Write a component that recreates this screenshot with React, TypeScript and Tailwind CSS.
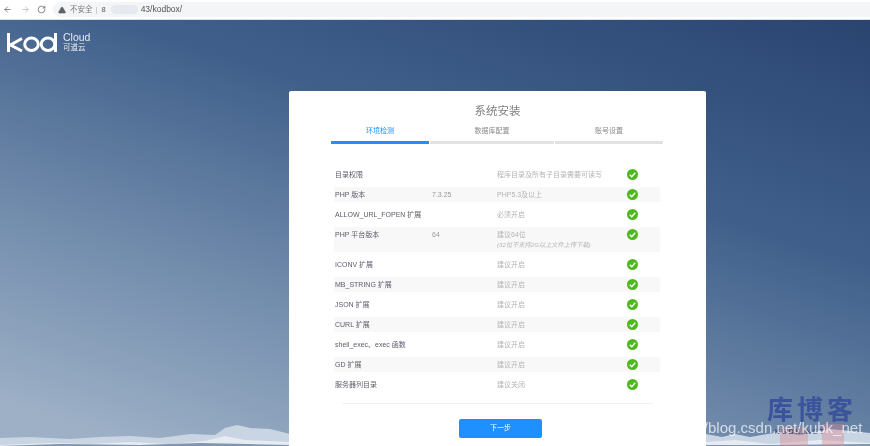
import React from 'react';
import { ArrowLeft, ArrowRight, RotateCw, TriangleAlert } from 'lucide-react';

const sans = "font-['Liberation_Sans','Noto_Sans_CJK_SC',sans-serif]";

const checks = [
  { name: '目录权限', value: '', desc: '程序目录及所有子目录需要可读写' },
  { name: 'PHP 版本', value: '7.3.25', desc: 'PHP5.3及以上' },
  { name: 'ALLOW_URL_FOPEN 扩展', value: '', desc: '必须开启' },
  { name: 'PHP 平台版本', value: '64', desc: '建议64位', note: '(32位不支持2G以上文件上传下载)' },
  { name: 'ICONV 扩展', value: '', desc: '建议开启' },
  { name: 'MB_STRING 扩展', value: '', desc: '建议开启' },
  { name: 'JSON 扩展', value: '', desc: '建议开启' },
  { name: 'CURL 扩展', value: '', desc: '建议开启' },
  { name: 'shell_exec、exec 函数', value: '', desc: '建议开启' },
  { name: 'GD 扩展', value: '', desc: '建议开启' },
  { name: '服务器列目录', value: '', desc: '建议关闭' },
];

const CheckIcon = () => (
  <svg width="11" height="11" viewBox="0 0 22 22" className="shrink-0">
    <circle cx="11" cy="11" r="11" fill="#4fb81f" />
    <path d="M5.5 11.5l4 4 7-8" fill="none" stroke="#fff" strokeWidth="2.8" />
  </svg>
);

const KodLogo = () => (
  <svg width="52" height="19" viewBox="0 0 52 19" fill="none" stroke="#fff" strokeWidth="3" className="shrink-0">
    <path d="M1.5 0v19" />
    <path d="M15 5.5L3.5 12 15 18" />
    <ellipse cx="24.5" cy="11.3" rx="6.8" ry="6.2" />
    <ellipse cx="41" cy="11.3" rx="6.8" ry="6.2" />
    <path d="M48.5 0v19" />
  </svg>
);

const Mountains = () => (
  <svg viewBox="0 0 870 28" preserveAspectRatio="none" className="absolute bottom-0 left-0 h-[28px] w-[870px]">
    <path
      d="M0 20 L30 19 L70 21 L100 19 L130 18 L160 20 L190 16 L215 17 L225 10 L237 7 L250 10 L270 11 L290 16 L706 16 L722 19 L735 16 L750 19 L780 14 L800 17 L830 11 L870 15 L870 28 L0 28 Z"
      fill="#c9d5e2"
    />
    <path
      d="M0 27 L50 25 L90 26 L130 24 L170 26 L205 23 L225 18 L245 22 L290 24 L706 24 L735 22 L770 26 L820 22 L870 25 L870 28 L0 28 Z"
      fill="#e6ecf2"
    />
    <path d="M0 28 L60 26 L140 27 L200 25 L290 27 L706 27 L770 27 L870 26 L870 28 Z" fill="#7f95b0" />
  </svg>
);

const App = () => {
  return (
    <div className={`h-[446px] w-[870px] overflow-hidden bg-white blur-[0.55px] ${sans}`}>
      <header className="flex h-[20px] items-center border-b border-[#dde1e6] bg-white pl-[3px]">
        <ArrowLeft className="h-[9px] w-[9px] text-[#5f6368]" />
        <ArrowRight className="ml-[9px] h-[9px] w-[9px] text-[#b5b8bc]" />
        <RotateCw className="ml-[7px] h-[9px] w-[9px] text-[#5f6368]" />
        <div className="ml-[7px] flex h-[15px] flex-1 items-center rounded-l-full bg-[#f4f5f6] pl-[5px] text-[7.5px] text-[#77797d]">
          <TriangleAlert className="h-[8px] w-[8px] fill-[#5f6368] text-[#5f6368]" />
          <span className="ml-[4px]">不安全</span>
          <span className="ml-[3px] text-[#b5b8bc]">|</span>
          <span className="ml-[4px] text-[#555]">8</span>
          <span className="ml-[5px] mr-[3px] h-[9px] w-[27px] rounded-full bg-[#e6eaf0]" />
          <span className="text-[8.5px] text-[#555]">43/kodbox/</span>
        </div>
      </header>

      <main className="relative flex h-[426px] overflow-hidden bg-[linear-gradient(198deg,#2a4470_0%,#40608b_35%,#7b94b2_72%,#9db0c6_94%)] pl-[289px] pt-[71px]">
        <Mountains />

        <div className="absolute left-[7px] top-[12px] flex items-center text-white">
          <KodLogo />
          <div className="ml-[4px] flex flex-col leading-none">
            <span className="text-[10.5px] leading-[11px] text-white/85">Cloud</span>
            <span className="text-[7.5px] leading-[9px] text-white/85">可道云</span>
          </div>
        </div>

        <section className="relative flex h-[400px] w-[417px] flex-col rounded-[2px] bg-white">
          <h1 className="mt-[12px] text-center text-[11.5px] leading-[17px] text-[#808080]">系统安装</h1>

          <div className="ml-[42px] mt-[6px] flex w-[332px] gap-[1px] text-center text-[7px] leading-[10px]">
            <div className="w-[98px] border-b-[3px] border-[#1e90ff] pb-[5px] text-[#1e90ff]">环境检测</div>
            <div className="w-[124px] border-b-[3px] border-[#e2e2e2] pb-[5px] text-[#8a8a8a]">数据库配置</div>
            <div className="w-[108px] border-b-[3px] border-[#e2e2e2] pb-[5px] text-[#8a8a8a]">账号设置</div>
          </div>

          <div className="ml-[45px] mt-[23px] flex w-[326px] flex-col gap-[5px]">
            {checks.map((row, i) => (
              <div
                key={row.name}
                className={`flex items-start text-[7px] leading-[15px] ${i % 2 === 1 ? 'bg-[#f8f8f8]' : ''} ${row.note ? 'h-[25px]' : 'h-[15px]'}`}
              >
                <span className="w-[98px] shrink-0 pl-[1px] text-[#5c5c6a]">{row.name}</span>
                <span className="w-[65px] shrink-0 text-[#9a9a9a]">{row.value}</span>
                <div className="w-[130px] shrink-0 text-[#b4b4b4]">
                  <div>{row.desc}</div>
                  {row.note && <div className="text-[6.2px] italic leading-[6px]">{row.note}</div>}
                </div>
                <span className="mt-[2px]">
                  <CheckIcon />
                </span>
              </div>
            ))}
          </div>

          <div className="mx-[53px] mt-[11px] border-t border-[#f0f0f0]" />

          <button className="ml-[170px] mt-[15px] h-[19px] w-[83px] rounded-[2px] bg-[#1e90ff] text-[7px] text-white">
            下一步
          </button>
        </section>

        <div className="absolute left-[780px] top-[407px] h-[19px] w-[28px] bg-[#d9868f]/40" />
        <div className="absolute left-[822px] top-[404px] h-[22px] w-[22px] bg-[#d9868f]/40" />
        <div className="absolute left-[775px] top-[408px] text-[7px] leading-[8px] tracking-[2px] text-[#33405f]">KUBK.NET</div>
        <div className="absolute left-[767px] top-[375px] text-[26px] font-bold leading-[30px] tracking-[4px] text-[#3a539b]">
          库博客
        </div>
        <div className="absolute left-[663px] top-[399px] whitespace-nowrap text-[15px] leading-[18px] text-white/70">
          https://blog.csdn.net/kubk_net
        </div>
      </main>
    </div>
  );
};

export default App;
